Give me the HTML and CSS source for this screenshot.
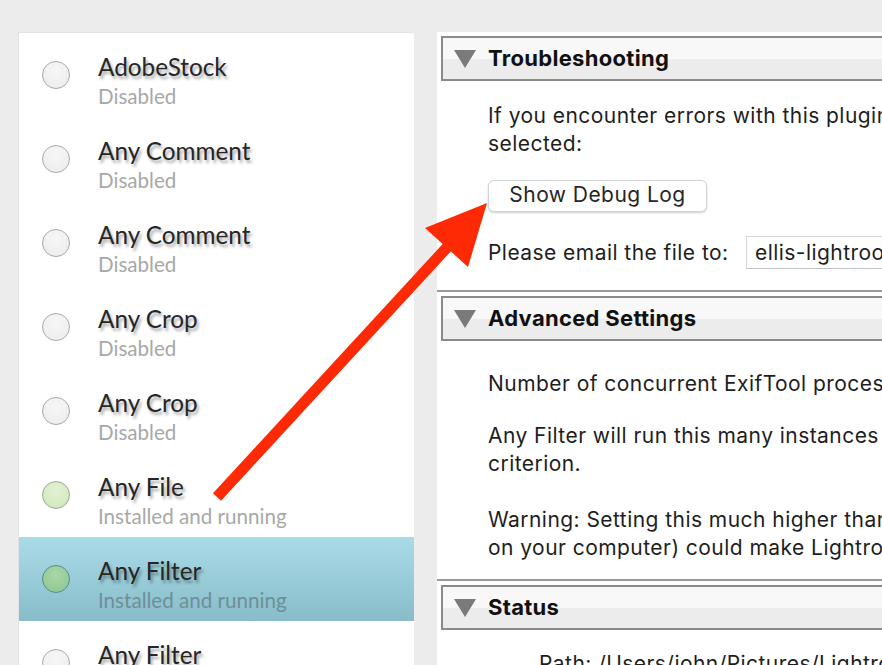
FILE: index.html
```html
<!DOCTYPE html>
<html lang="en">
<head>
<meta charset="utf-8">
<title>Plug-in Manager</title>
<link rel="stylesheet" href="styles.css">
</head>
<body>
<div class="app">
  <div class="list">
    <div class="row">
      <span class="dot"></span>
      <div class="info"><div class="name">AdobeStock</div><div class="state">Disabled</div></div>
    </div>
    <div class="row">
      <span class="dot"></span>
      <div class="info"><div class="name">Any Comment</div><div class="state">Disabled</div></div>
    </div>
    <div class="row">
      <span class="dot"></span>
      <div class="info"><div class="name">Any Comment</div><div class="state">Disabled</div></div>
    </div>
    <div class="row">
      <span class="dot"></span>
      <div class="info"><div class="name">Any Crop</div><div class="state">Disabled</div></div>
    </div>
    <div class="row">
      <span class="dot"></span>
      <div class="info"><div class="name">Any Crop</div><div class="state">Disabled</div></div>
    </div>
    <div class="row">
      <span class="dot dot-on"></span>
      <div class="info"><div class="name">Any File</div><div class="state">Installed and running</div></div>
    </div>
    <div class="row row-selected">
      <span class="dot dot-on-selected"></span>
      <div class="info"><div class="name">Any Filter</div><div class="state">Installed and running</div></div>
    </div>
    <div class="row">
      <span class="dot"></span>
      <div class="info"><div class="name">Any Filter</div><div class="state">Disabled</div></div>
    </div>
  </div>

  <div class="detail">
    <section class="section">
      <div class="sec-head"><span class="tri"></span><span class="sec-title">Troubleshooting</span></div>
      <div class="sec-body sec-trouble">
        <p class="para">If you encounter errors with this plugin, please send the debug log with the photo<br>selected:</p>
        <button class="btn" type="button">Show Debug Log</button>
        <div class="email-row">
          <span class="email-label">Please email the file to:</span>
          <span class="email-field">ellis-lightroom@johnellis.net</span>
        </div>
      </div>
    </section>
    <section class="section">
      <div class="sec-head"><span class="tri"></span><span class="sec-title">Advanced Settings</span></div>
      <div class="sec-body sec-adv">
        <p class="para">Number of concurrent ExifTool processes:</p>
        <p class="para para-gap">Any Filter will run this many instances of ExifTool when searching with a metadata<br>criterion.</p>
        <p class="para para-gap2">Warning: Setting this much higher than the number of cores (processors)<br>on your computer) could make Lightroom unresponsive.</p>
      </div>
    </section>
    <section class="section">
      <div class="sec-head"><span class="tri"></span><span class="sec-title">Status</span></div>
      <div class="sec-body sec-status">
        <p class="para path">Path: /Users/john/Pictures/Lightroom/Plugins/anyfilter.lrplugin</p>
      </div>
    </section>
  </div>
</div>

<svg class="arrow" width="882" height="665" viewBox="0 0 882 665" aria-hidden="true">
  <line x1="217" y1="497" x2="452" y2="242" stroke="#fe2a06" stroke-width="11"/>
  <polygon points="487,203 425,228 468,267" fill="#fe2a06"/>
</svg>
</body>
</html>
```
FILE: styles.css
```css
html, body {
  margin: 0;
  padding: 0;
  overflow: hidden;
  background: #ececec;
  width: 882px;
  height: 665px;
}

.app {
  display: flex;
  gap: 23px;
  padding: 32px 0 0 18px;
  width: 1200px;
}

/* ---------- plug-in list ---------- */
.list {
  width: 395px;
  flex: none;
  background: #fff;
  border-top: 1px solid #e2e2e2;
  border-left: 1px solid #e2e2e2;
  height: 700px;
  font-family: Lato, "Open Sans", sans-serif;
}

.row {
  height: 84px;
  display: flex;
  align-items: center;
  padding-left: 23px;
  box-sizing: border-box;
}

.row-selected {
  background: linear-gradient(#aadce8, #87bcc8);
}

.dot {
  width: 26px;
  height: 26px;
  border-radius: 50%;
  border: 1.5px solid #a9a9a9;
  background: radial-gradient(circle at 50% 35%, #f7f7f7, #ebebeb);
  flex: none;
}

.dot-on {
  background: radial-gradient(circle at 50% 35%, #e2f2d2, #cde6b8);
  border-color: #9fa79a;
}

.dot-on-selected {
  background: radial-gradient(circle at 50% 35%, #a8d8a6, #8cc490);
  border-color: #5d8a8c;
}

.info {
  margin-left: 28px;
  align-self: flex-start;
  padding-top: 20px;
  display: flex;
  flex-direction: column;
}

.name {
  font-size: 24.3px;
  line-height: 28px;
  color: #262626;
  text-shadow: 2px 3px 3px rgba(0, 0, 0, 0.35);
}

.state {
  margin-top: 2px;
  font-size: 20.6px;
  line-height: 26px;
  color: #a8a8a8;
}

.row-selected .state {
  color: #6d8f97;
}

/* ---------- detail panel ---------- */
.detail {
  width: 720px;
  flex: none;
  background: #fff;
  padding-top: 4px;
  height: 700px;
  font-family: Inter, "Liberation Sans", sans-serif;
  color: #1e1e1e;
}

.section {
  padding-left: 4px;
}

.section + .section {
  border-top: 2px solid #9a9a9a;
  padding-top: 4px;
}

.sec-head {
  height: 41px;
  border: 2px solid #8a8a8a;
  background: linear-gradient(#f8f8f8 0, #f8f8f8 50%, #ececec 50%, #ececec 100%);
  display: flex;
  align-items: center;
}

.tri {
  width: 0;
  height: 0;
  border-left: 11px solid transparent;
  border-right: 11px solid transparent;
  border-top: 18px solid #7a7a7a;
  margin-left: 11px;
  margin-top: 1px;
}

.sec-title {
  margin-left: 12px;
  margin-bottom: 2px;
  font-weight: 700;
  font-size: 22px;
  letter-spacing: 0.3px;
  color: #111;
}

.sec-body {
  padding-left: 47px;
  font-size: 21px;
  letter-spacing: 0.45px;
  white-space: nowrap;
}

.para {
  margin: 0;
  line-height: 28px;
}

.sec-trouble {
  padding-top: 21px;
  padding-bottom: 21px;
}

.btn {
  display: block;
  margin-top: 22px;
  width: 219px;
  height: 32px;
  font-family: Inter, "Liberation Sans", sans-serif;
  font-size: 21px;
  letter-spacing: 0.45px;
  line-height: 28px;
  color: #262626;
  background: #fff;
  border: 1px solid #d4d4d4;
  border-radius: 6px;
  box-shadow: 0 1px 2px rgba(0, 0, 0, 0.2);
  padding: 0 0 2px;
}

.email-row {
  display: flex;
  align-items: center;
  margin-top: 24px;
  height: 33px;
}

.email-label {
  width: 258px;
}

.email-field {
  height: 33px;
  box-sizing: border-box;
  line-height: 31px;
  padding-left: 8px;
  border: 1px solid #d8d8d8;
  border-bottom-color: #c4c4c4;
  width: 300px;
}

.sec-adv {
  padding-top: 29px;
  padding-bottom: 17px;
}

.para-gap {
  margin-top: 24px;
}

.para-gap2 {
  margin-top: 28px;
}

.sec-status {
  padding-top: 20px;
}

.path {
  padding-left: 51px;
}

.arrow {
  position: absolute;
  top: 0;
  left: 0;
  pointer-events: none;
}
```
